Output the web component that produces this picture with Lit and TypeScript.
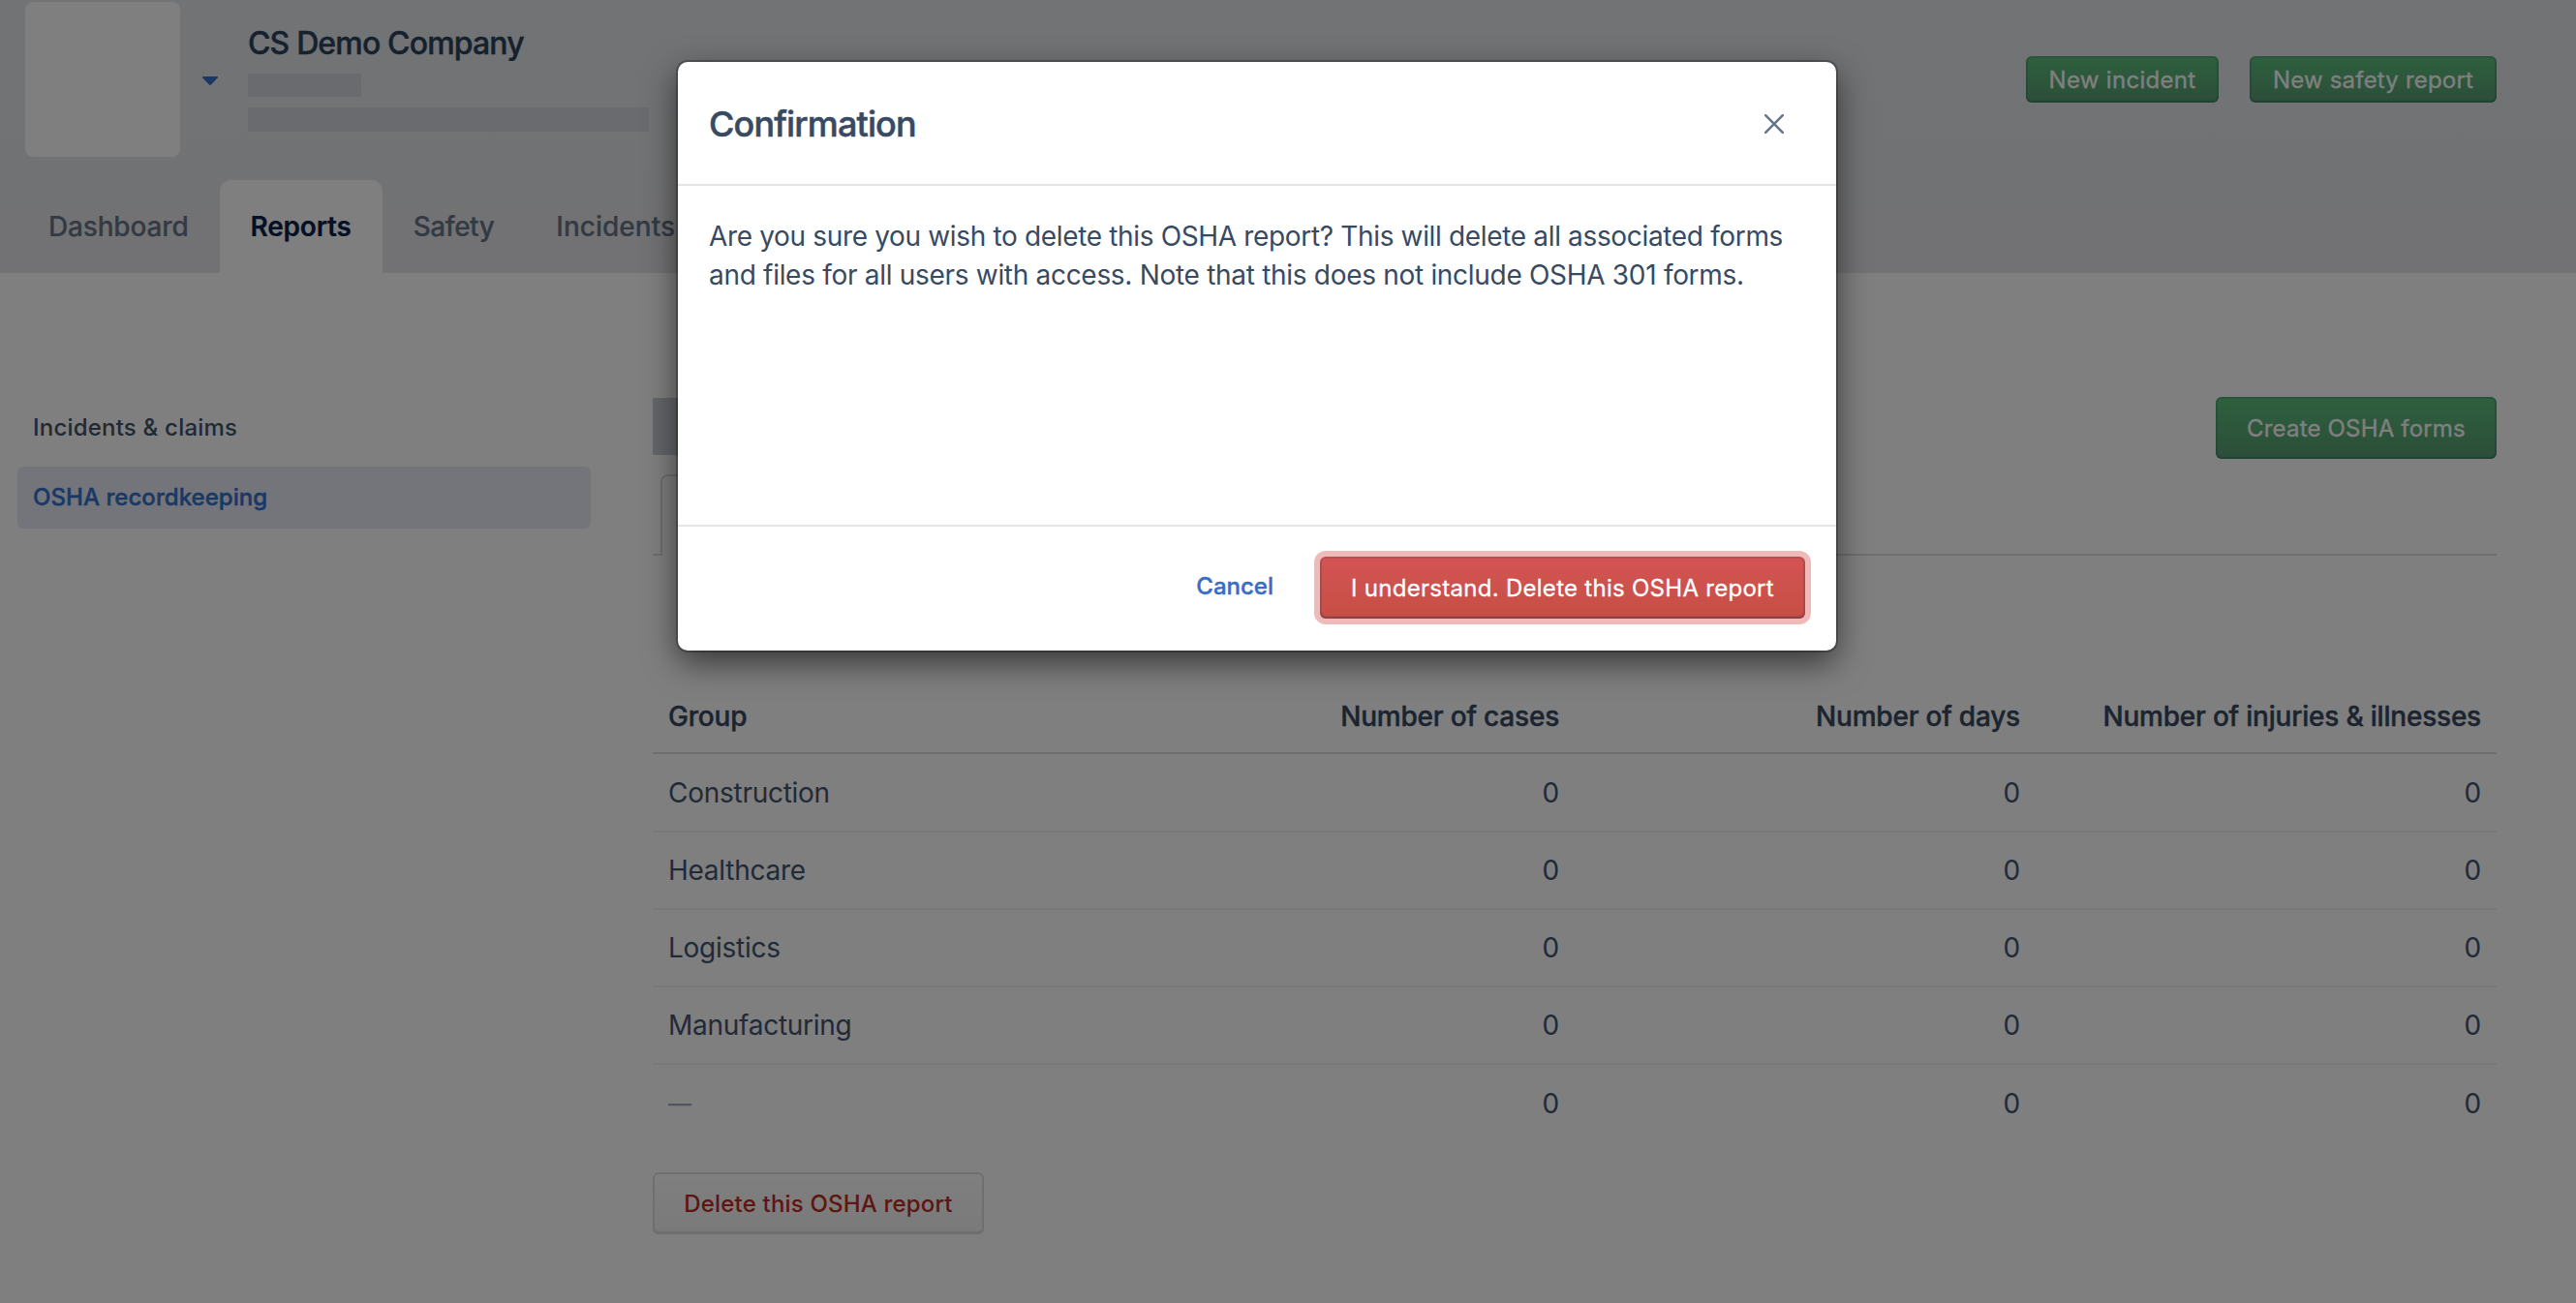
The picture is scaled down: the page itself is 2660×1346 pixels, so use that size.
import { LitElement, html, css } from "lit";
import { customElement, state } from "lit/decorators.js";
import { classMap } from "lit/directives/class-map.js";

interface GroupRow {
  group: string;
  cases: number;
  days: number;
  injuries: number;
}

const TABS = ["Dashboard", "Reports", "Safety", "Incidents"];

const ROWS: GroupRow[] = [
  { group: "Construction", cases: 0, days: 0, injuries: 0 },
  { group: "Healthcare", cases: 0, days: 0, injuries: 0 },
  { group: "Logistics", cases: 0, days: 0, injuries: 0 },
  { group: "Manufacturing", cases: 0, days: 0, injuries: 0 },
  { group: "", cases: 0, days: 0, injuries: 0 },
];

const base = css`
  :host {
    display: block;
    font-family: Inter, "Liberation Sans", sans-serif;
  }
  * {
    box-sizing: border-box;
  }
  button {
    font: inherit;
    margin: 0;
    padding: 0;
    border: 0;
    background: none;
    white-space: nowrap;
  }
  .primary {
    color: #fff;
    font-size: 24px;
    font-weight: 400;
    -webkit-text-stroke: 0.3px currentColor;
    border-radius: 6px;
    background: linear-gradient(#5cc07c, #589c72);
    box-shadow: inset 0 0 0 2px rgba(38, 90, 96, 0.22), inset 0 -2px 2px rgba(38, 64, 76, 0.16);
  }
`;

@customElement("page-header")
class PageHeader extends LitElement {
  static styles = [
    base,
    css`
      .header {
        height: 282px;
        display: flex;
        flex-direction: column;
        justify-content: space-between;
        background: linear-gradient(#e3e6e9, #e4e5e9);
      }
      .top {
        display: flex;
        align-items: flex-start;
        padding: 2px 82px 0 26px;
      }
      .logo {
        width: 160px;
        height: 160px;
        border-radius: 8px;
        background: #fff;
      }
      .caret {
        display: block;
        margin: 77px 30px 0 23px;
      }
      .company {
        flex: 1;
        padding-top: 23px;
      }
      .name {
        margin: 0 0 11px 1px;
        font-size: 32px;
        line-height: 40px;
        font-weight: 500;
        -webkit-text-stroke: 0.4px currentColor;
        letter-spacing: -0.0265em;
        color: #2c425c;
      }
      .bar {
        width: 117px;
        height: 24px;
        margin-left: 1px;
        background: #d5d6dc;
      }
      .bar.wide {
        width: 414px;
        height: 25px;
        margin-top: 11px;
      }
      .actions {
        display: flex;
        gap: 32px;
        padding-top: 56px;
      }
      .primary {
        height: 48px;
        width: 199px;
        letter-spacing: 0.0125em;
      }
      .primary.wide {
        width: 255px;
        letter-spacing: 0.0077em;
      }
      .tabs {
        display: flex;
        padding-left: 18px;
      }
      .tab {
        height: 96px;
        padding: 0 32px;
        line-height: 96px;
        font-size: 28px;
        font-weight: 500;
        -webkit-text-stroke: 0.2px currentColor;
        letter-spacing: -0.006em;
        color: #687486;
      }
      .tab.active {
        font-weight: 600;
        letter-spacing: -0.0075em;
        color: #08204a;
        background: #fcfffc;
        border-radius: 12px 12px 0 0;
      }
      .tab.safety {
        letter-spacing: -0.0172em;
      }
      .tab.incidents {
        letter-spacing: 0;
      }
    `,
  ];
  render() {
    return html`<header class="header">
      <div class="top">
        <div class="logo"></div>
        <svg class="caret" width="16" height="10" viewBox="0 0 16 10">
          <path d="M.8 0h14.400c.8 0 1 .8.500 1.500L9.200 8.200c-.7.900-1.700.900-2.400 0L.3 1.500C-.2.800 0 0 .8 0z" fill="#3470cc" />
        </svg>
        <div class="company">
          <h1 class="name">CS Demo Company</h1>
          <div class="bar"></div>
          <div class="bar wide"></div>
        </div>
        <div class="actions">
          <button class="primary">New incident</button>
          <button class="primary wide">New safety report</button>
        </div>
      </div>
      <nav class="tabs">
        ${TABS.map(
          (t) => html`<div class=${classMap({ tab: true, active: t === "Reports", [t.toLowerCase()]: true })}>${t}</div>`
        )}
      </nav>
    </header>`;
  }
}

@customElement("side-nav")
class SideNav extends LitElement {
  static styles = [
    base,
    css`
      .nav {
        display: flex;
        flex-direction: column;
        gap: 8px;
      }
      .item {
        height: 64px;
        padding-left: 16px;
        line-height: 64px;
        border-radius: 6px;
        font-size: 24px;
        font-weight: 500;
        letter-spacing: 0.0086em;
        color: #42526a;
      }
      .item.active {
        -webkit-text-stroke: 0.4px currentColor;
        letter-spacing: 0.002em;
        color: #3470cc;
        background: #e6ebf5;
      }
    `,
  ];
  render() {
    return html`<nav class="nav">
      <div class="item">Incidents &amp; claims</div>
      <div class="item active">OSHA recordkeeping</div>
    </nav>`;
  }
}

@customElement("summary-table")
class SummaryTable extends LitElement {
  static styles = [
    base,
    css`
      .row {
        display: grid;
        grid-template-columns: repeat(4, 1fr);
        align-items: center;
        height: 80px;
        border-bottom: 2px solid #eff1ef;
        font-size: 28px;
        letter-spacing: -0.0095em;
        color: #445470;
      }
      .row.first {
        height: 81px;
      }
      .row.last {
        border-bottom: 0;
      }
      .row.head {
        height: 76px;
        border-bottom-color: #dbdddb;
        font-weight: 500;
        -webkit-text-stroke: 0.4px currentColor;
        letter-spacing: -0.0075em;
        color: #364860;
      }
      .cell {
        padding: 0 16px;
        white-space: nowrap;
      }
      .num {
        text-align: right;
      }
      .muted {
        display: inline-block;
        color: #a0a8ba;
        transform-origin: left;
        transform: scaleX(0.86);
      }
    `,
  ];
  render() {
    return html`<div>
      <div class="row head">
        <div class="cell">Group</div>
        <div class="cell num">Number of cases</div>
        <div class="cell num">Number of days</div>
        <div class="cell num">Number of injuries &amp; illnesses</div>
      </div>
      ${ROWS.map(
        (r, i) => html`<div class=${classMap({ row: true, first: i === 0, last: i === ROWS.length - 1 })}>
          <div class="cell">${r.group || html`<span class="muted">—</span>`}</div>
          <div class="cell num">${r.cases}</div>
          <div class="cell num">${r.days}</div>
          <div class="cell num">${r.injuries}</div>
        </div>`
      )}
    </div>`;
  }
}

@customElement("confirm-dialog")
class ConfirmDialog extends LitElement {
  static styles = [
    base,
    css`
      .dialog {
        width: 1196px;
        height: 608px;
        display: flex;
        flex-direction: column;
        border-radius: 10px;
        background: #fff;
        color: #384a62;
        box-shadow: 0 0 0 2px rgba(0, 0, 0, 0.24), 0 12px 34px rgba(0, 0, 0, 0.58);
      }
      .head {
        height: 128px;
        display: flex;
        align-items: center;
        justify-content: space-between;
        padding: 2px 54px 0 32px;
        border-bottom: 2px solid #e4e4e4;
      }
      .title {
        margin: 0;
        font-size: 36px;
        font-weight: 500;
        -webkit-text-stroke: 0.5px currentColor;
        letter-spacing: -0.024em;
      }
      .close {
        display: block;
      }
      .body {
        flex: 1;
        padding: 32px 32px 0;
        font-size: 28px;
        line-height: 40px;
        letter-spacing: -0.0122em;
      }
      .line {
        display: block;
        white-space: nowrap;
      }
      .line.second {
        letter-spacing: -0.0107em;
      }
      .foot {
        height: 130px;
        display: flex;
        align-items: center;
        justify-content: flex-end;
        gap: 48px;
        padding: 0 32px 2px 0;
        border-top: 2px solid #e4e5eb;
      }
      .cancel {
        font-size: 24px;
        line-height: 64px;
        font-weight: 500;
        -webkit-text-stroke: 0.4px currentColor;
        color: #346ec8;
        padding-bottom: 2px;
      }
      .danger {
        width: 501px;
        height: 64px;
        border-radius: 6px;
        font-size: 24px;
        font-weight: 400;
        -webkit-text-stroke: 0.3px currentColor;
        letter-spacing: 0.0115em;
        color: #fff;
        background: linear-gradient(#d45454, #c64e44);
        box-shadow: inset 0 0 0 2px rgba(130, 60, 76, 0.3), inset 0 -2px 2px rgba(80, 50, 70, 0.5),
          0 0 0 6px #f0bab8;
      }
    `,
  ];
  render() {
    return html`<section class="dialog" role="dialog">
      <div class="head">
        <h2 class="title">Confirmation</h2>
        <svg class="close" width="20" height="20" viewBox="0 0 20 20">
          <path d="M1.200 1.200l17.600 17.600M18.800 1.200L1.200 18.800" stroke="#64748a" stroke-width="2.500" stroke-linecap="round" fill="none" />
        </svg>
      </div>
      <div class="body">
        <span class="line">Are you sure you wish to delete this OSHA report? This will delete all associated forms</span>
        <span class="line second">and files for all users with access. Note that this does not include OSHA 301 forms.</span>
      </div>
      <div class="foot">
        <button class="cancel" @click=${this.close}>Cancel</button>
        <button class="danger" @click=${this.close}>I understand. Delete this OSHA report</button>
      </div>
    </section>`;
  }
  private close() {
    this.dispatchEvent(new CustomEvent("dialog-close"));
  }
}

@customElement("app-root")
class AppRoot extends LitElement {
  static styles = [
    base,
    css`
      .page {
        position: relative;
        width: 2660px;
        height: 1346px;
        overflow: hidden;
        background: #fcfffc;
      }
      .main {
        display: grid;
        grid-template-columns: 592px 1904px;
        column-gap: 64px;
        padding: 128px 82px 0 18px;
      }
      .toolbar {
        display: flex;
        justify-content: space-between;
        height: 64px;
      }
      .heading {
        width: 400px;
        height: 59px;
        margin-top: 1px;
        background: #cacdd4;
      }
      .primary {
        width: 290px;
        height: 64px;
        letter-spacing: 0.0075em;
      }
      .subtabs {
        display: flex;
        height: 84px;
        margin: 16px 0 129px;
      }
      .edge {
        width: 8px;
        border-bottom: 2px solid #dbdddb;
      }
      .subtab {
        width: 260px;
        border: 2px solid #dbdddb;
        border-bottom: 0;
        border-radius: 8px 8px 0 0;
      }
      .rest {
        flex: 1;
        border-bottom: 2px solid #dbdddb;
      }
      .delete {
        width: 342px;
        height: 64px;
        margin-top: 31px;
        border-radius: 6px;
        font-size: 24px;
        font-weight: 500;
        letter-spacing: 0.0073em;
        color: #be2a22;
        background: linear-gradient(#ffffff, #f4f4f4);
        box-shadow: inset 0 0 0 2px #dddfdd, inset 0 -3px 1px #d6d8d6;
      }
      .overlay {
        position: absolute;
        inset: 0;
        display: flex;
        justify-content: center;
        align-items: flex-start;
        padding: 64px 64px 0 0;
        background: rgba(0, 0, 0, 0.5);
      }
    `,
  ];

  @state() private open = true;

  render() {
    return html`<div class="page">
      <page-header></page-header>
      <main class="main">
        <side-nav></side-nav>
        <div>
          <div class="toolbar">
            <div class="heading"></div>
            <button class="primary">Create OSHA forms</button>
          </div>
          <div class="subtabs">
            <div class="edge"></div>
            <div class="subtab"></div>
            <div class="rest"></div>
          </div>
          <summary-table></summary-table>
          <button class="delete" @click=${() => (this.open = true)}>Delete this OSHA report</button>
        </div>
      </main>
      ${this.open
        ? html`<div class="overlay">
            <confirm-dialog @dialog-close=${() => (this.open = false)}></confirm-dialog>
          </div>`
        : null}
    </div>`;
  }
}
